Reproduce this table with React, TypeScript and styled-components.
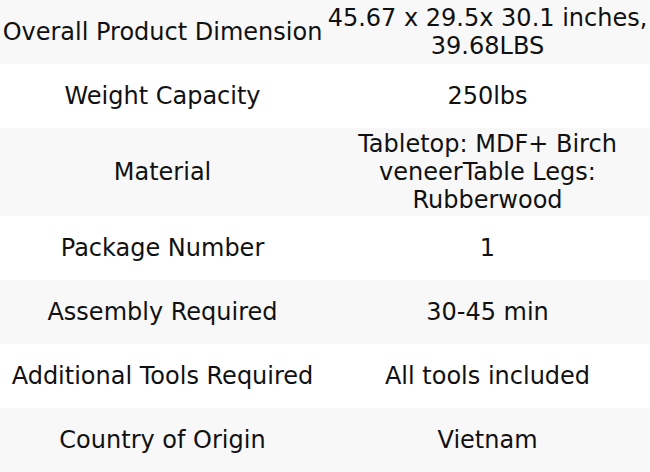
import React from 'react'
import styled, { createGlobalStyle } from 'styled-components'

const GlobalStyle = createGlobalStyle`
  html, body {
    margin: 0;
    padding: 0;
    background: #fff;
  }
  body {
    font-family: "DejaVu Sans", "Liberation Sans", sans-serif;
    color: #111;
  }
`

const Table = styled.div`
  width: 650px;
  display: flex;
  flex-direction: column;
`

const Row = styled.div<{ $shaded: boolean }>`
  display: grid;
  grid-template-columns: 325px 325px;
  min-height: 64px;
  background-color: ${p => (p.$shaded ? '#f8f8f8' : '#ffffff')};
`

const Cell = styled.div`
  display: flex;
  align-items: center;
  justify-content: center;
  text-align: center;
  padding: 2px 2px;
  font-size: 24px;
  line-height: 28px;
`

const specs = [
  ['Overall Product Dimension', '45.67 x 29.5x 30.1 inches, 39.68LBS'],
  ['Weight Capacity', '250lbs'],
  ['Material', 'Tabletop: MDF+ Birch veneerTable Legs: Rubberwood'],
  ['Package Number', '1'],
  ['Assembly Required', '30-45 min'],
  ['Additional Tools Required', 'All tools included'],
  ['Country of Origin', 'Vietnam'],
]

export default function App() {
  return (
    <>
      <GlobalStyle />
      <Table>
        {specs.map(([label, value], i) => (
          <Row key={label} $shaded={i % 2 === 0}>
            <Cell>{label}</Cell>
            <Cell>{value}</Cell>
          </Row>
        ))}
      </Table>
    </>
  )
}
